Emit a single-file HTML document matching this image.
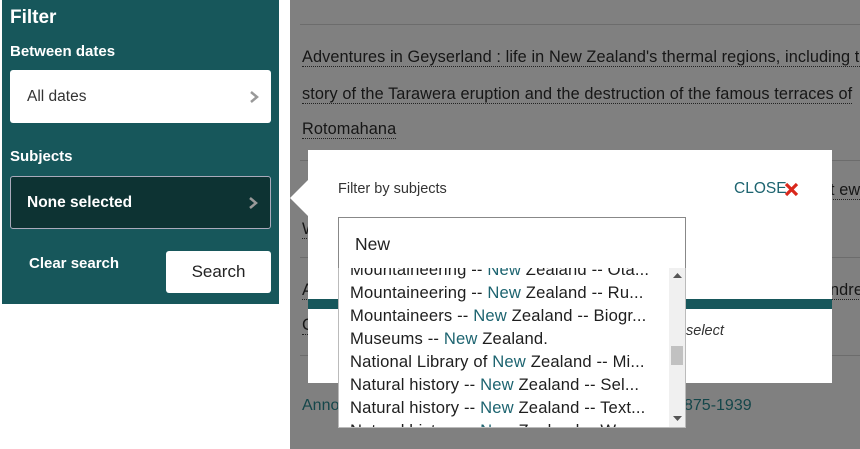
<!DOCTYPE html>
<html><head><meta charset="utf-8"><style>
*{margin:0;padding:0;box-sizing:border-box}
body{width:860px;height:449px;overflow:hidden;background:#fff;font-family:"Liberation Sans",sans-serif;position:relative}
.abs{position:absolute}
.side{left:2px;top:0;width:277px;height:304px;background:#17575b;color:#fff}
.gray{left:290px;top:0;width:570px;height:449px;background:#808080;overflow:hidden}
.bt{position:absolute;left:12px;font-size:16.3px;color:#161616;white-space:nowrap;border-bottom:1px dotted #222;line-height:18px;letter-spacing:0.1px}
.rule{position:absolute;left:10px;right:0;height:1px;background:#6c6c6c}
.chev{position:absolute;right:10px;top:50%;margin-top:-7px;width:14px;height:14px}
.item{position:absolute;left:11px;font-size:16.6px;color:#1e1e1e;white-space:nowrap;height:23px;line-height:23px;letter-spacing:0.15px}
.item b{font-weight:normal;color:#1d6470}
</style></head><body>
<div class="abs side">
 <div class="abs" style="left:8px;top:7px;font-size:19px;font-weight:bold">Filter</div>
 <div class="abs" style="left:8px;top:43px;font-size:15px;font-weight:bold">Between dates</div>
 <div class="abs" style="left:8px;top:70px;width:261px;height:53px;background:#fff;border-radius:3px;color:#333;font-size:15.5px;line-height:53px;padding-left:17px">All dates
  <svg class="chev" viewBox="0 0 14 14"><path d="M4 2 L10 7 L4 12" stroke="#999" stroke-width="2.5" fill="none"/></svg></div>
 <div class="abs" style="left:8px;top:148px;font-size:15px;font-weight:bold">Subjects</div>
 <div class="abs" style="left:8px;top:176px;width:261px;height:53px;background:#0d3333;border:1px solid #aab;border-radius:3px;color:#fff;font-size:15.5px;font-weight:bold;line-height:51px;padding-left:16px">None selected
  <svg class="chev" viewBox="0 0 14 14"><path d="M4 2 L10 7 L4 12" stroke="#999" stroke-width="2.5" fill="none"/></svg></div>
 <div class="abs" style="left:27px;top:255px;font-size:15px;font-weight:bold">Clear search</div>
 <div class="abs" style="left:164px;top:251px;width:105px;height:42px;background:#fff;border-radius:3px;color:#222;font-size:17px;text-align:center;line-height:42px">Search</div>
</div>
<div class="abs gray">
 <div class="rule" style="top:24px"></div>
 <div class="bt" style="top:48px">Adventures in Geyserland : life in New Zealand's thermal regions, including the</div>
 <div class="bt" style="top:85px">story of the Tarawera eruption and the destruction of the famous terraces of</div>
 <div class="bt" style="top:120px">Rotomahana</div>
 <div class="rule" style="top:160px"></div>
 <div class="bt" style="top:181px;left:540px">t ew</div>
 <div class="bt" style="top:220px">W</div>
 <div class="rule" style="top:257px"></div>
 <div class="bt" style="top:281px">A</div>
 <div class="bt" style="top:281px;left:540px">ndre</div>
 <div class="bt" style="top:316px">C</div>
 <div class="rule" style="top:355px"></div>
 <div class="abs" style="left:12px;top:397px;font-size:16px;color:#14464a">Anno</div>
 <div class="abs" style="left:394px;top:397px;font-size:16px;color:#14464a">875-1939</div>
</div>
<svg class="abs" style="left:290px;top:180px" width="20" height="52"><path d="M18 0 L0 18 L18 36 Z" fill="#fff"/></svg>
<div class="abs" style="left:308px;top:150px;width:524px;height:233px;background:#fff">
 <div class="abs" style="left:30px;top:31px;font-size:14.5px;color:#333">Filter by subjects</div>
 <div class="abs" style="left:426px;top:30px;font-size:15.5px;color:#1d6470">CLOSE</div>
 <svg class="abs" style="left:476px;top:32px" width="15" height="15" viewBox="0 0 15 15"><path d="M2 2 L13 13 M13 2 L2 13" stroke="#d9281c" stroke-width="3.2"/></svg>
 <div class="abs" style="left:0;top:149px;width:524px;height:10px;background:#17575b"></div>
 <div class="abs" style="left:378px;top:173px;font-size:14.5px;font-style:italic;color:#333">select</div>
</div>
<div class="abs" style="left:338px;top:217px;width:348px;height:52px;background:#fff;border:1px solid #888;font-size:17.5px;color:#222;padding-left:16px;line-height:52px">New</div>
<div class="abs" style="left:338px;top:268px;width:348px;height:160px;background:#fff;border:1px solid #bbb;border-top:none;overflow:hidden">
 <div class="item" style="top:-10px">Mountaineering -- <b>New</b> Zealand -- Ota...</div>
 <div class="item" style="top:13px">Mountaineering -- <b>New</b> Zealand -- Ru...</div>
 <div class="item" style="top:36px">Mountaineers -- <b>New</b> Zealand -- Biogr...</div>
 <div class="item" style="top:59px">Museums -- <b>New</b> Zealand.</div>
 <div class="item" style="top:82px">National Library of <b>New</b> Zealand -- Mi...</div>
 <div class="item" style="top:105px">Natural history -- <b>New</b> Zealand -- Sel...</div>
 <div class="item" style="top:128px">Natural history -- <b>New</b> Zealand -- Text...</div>
 <div class="item" style="top:151px">Natural history -- <b>New</b> Zealand -- Wes...</div>
 <div class="abs" style="left:330px;top:0;width:17px;height:160px;background:#f0f0f0">
  <svg class="abs" style="left:4px;top:5px" width="9" height="6"><path d="M0 5 L4.5 0 L9 5Z" fill="#555"/></svg>
  <div class="abs" style="left:2px;top:78px;width:12px;height:19px;background:#c1c1c1"></div>
  <svg class="abs" style="left:4px;top:148px" width="9" height="6"><path d="M0 0 L4.5 5 L9 0Z" fill="#555"/></svg>
 </div>
</div>
</body></html>
